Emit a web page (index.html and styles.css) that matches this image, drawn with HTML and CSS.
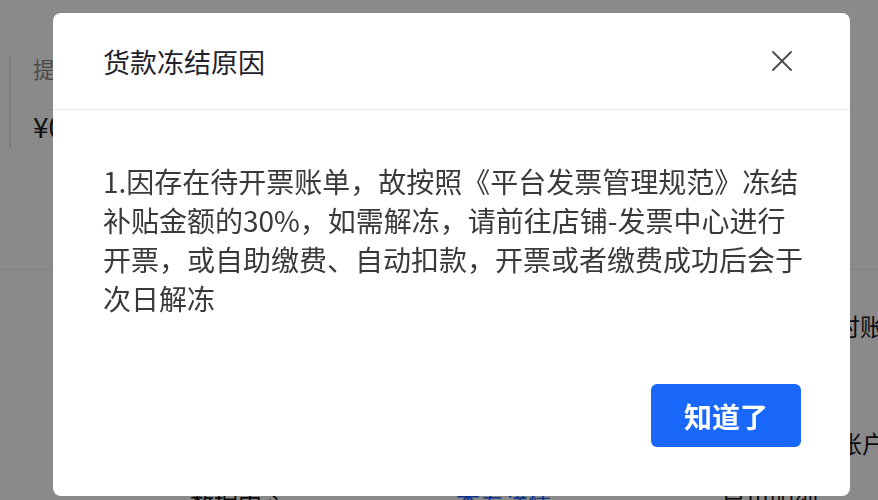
FILE: index.html
```html
<!DOCTYPE html>
<html lang="zh-CN">
<head>
    <meta charset="UTF-8">
    <meta name="viewport" content="width=device-width, initial-scale=1.0">
    <title>货款冻结原因</title>
    <link rel="stylesheet" href="styles.css">
</head>
<body>
    <div class="page">
        <div class="funds">
            <div class="funds-item">
                <div class="funds-label">提现金额</div>
                <div class="funds-value">¥0.00</div>
            </div>
        </div>
        <div class="page-rule"></div>
        <div class="side-row">
            <span class="side-text">临时账单</span>
        </div>
        <div class="side-row side-row-low">
            <span class="side-text">账户</span>
        </div>
        <div class="links">
            <span class="link-dark">数据中心</span>
            <span class="link-blue">查看详情</span>
            <span class="link-dark">导出明细</span>
        </div>
    </div>

    <div class="mask">
        <div class="dialog">
            <div class="dialog-header">
                <div class="dialog-title">货款冻结原因</div>
                <button class="dialog-close" aria-label="关闭">
                    <svg width="20" height="20" viewBox="0 0 20 20">
                        <path d="M1 1 L19 19 M19 1 L1 19" stroke="#4a4a50" stroke-width="1.8" fill="none" stroke-linecap="round"/>
                    </svg>
                </button>
            </div>
            <div class="dialog-body">
                1.因存在待开票账单，故按照《平台发票管理规范》冻结<br>
                补贴金额的30%，如需解冻，请前往店铺-发票中心进行<br>
                开票，或自助缴费、自动扣款，开票或者缴费成功后会于<br>
                次日解冻
            </div>
            <div class="dialog-footer">
                <button class="btn-ok">知道了</button>
            </div>
        </div>
    </div>
</body>
</html>
```

FILE: styles.css
```css
body {
    margin: 0;
    background-color: #fff;
    font-family: "Noto Sans CJK SC", "Noto Sans", sans-serif;
    overflow: hidden;
}

.page {
    width: 878px;
    height: 500px;
    overflow: hidden;
}

.funds {
    display: flex;
    padding-top: 55px;
}

.funds-item {
    margin-left: 9px;
    padding-left: 22px;
    height: 93px;
    border-left: 2px solid #e4e4e4;
}

.funds-label {
    font-size: 22px;
    line-height: 26px;
    color: #8a8a8a;
}

.funds-value {
    margin-top: 30px;
    font-size: 28px;
    line-height: 30px;
    color: #222;
}

.page-rule {
    margin-top: 121px;
    height: 1px;
    background-color: #ececec;
}

.side-row {
    margin-top: 42px;
    padding-left: 812px;
    white-space: nowrap;
}

.side-row-low {
    margin-top: 88px;
    padding-left: 838px;
}

.side-text {
    font-size: 24px;
    line-height: 28px;
    color: #1a1626;
}

.links {
    margin-top: 31px;
    display: flex;
    gap: 170px;
    padding-left: 190px;
    font-size: 24px;
    line-height: 28px;
    white-space: nowrap;
}

.link-dark {
    color: #111;
}

.link-blue {
    color: #1966ff;
}

.mask {
    position: fixed;
    inset: 0;
    background-color: rgba(0, 0, 0, 0.46);
    padding: 13px 0 0 53px;
}

.dialog {
    width: 797px;
    height: 483px;
    background-color: #fff;
    border-radius: 8px;
    display: flex;
    flex-direction: column;
}

.dialog-header {
    height: 96px;
    display: flex;
    align-items: center;
    justify-content: space-between;
    padding: 0 58px 0 50px;
    border-bottom: 1px solid #ebebeb;
}

.dialog-title {
    font-size: 27px;
    color: #22222c;
}

.dialog-close {
    width: 20px;
    height: 20px;
    padding: 0;
    border: none;
    background: none;
    cursor: pointer;
}

.dialog-close svg {
    display: block;
}

.dialog-body {
    flex: 1;
    padding: 52px 20px 0 50px;
    font-size: 28px;
    line-height: 39px;
    color: #3a3a3a;
    white-space: nowrap;
}

.dialog-footer {
    display: flex;
    justify-content: flex-end;
    padding: 0 49px 49px 0;
}

.btn-ok {
    width: 150px;
    height: 63px;
    border: none;
    border-radius: 6px;
    background-color: #1968fa;
    color: #fff;
    font-family: "Noto Sans CJK SC", sans-serif;
    font-size: 28px;
    font-weight: bold;
    cursor: pointer;
}
```
